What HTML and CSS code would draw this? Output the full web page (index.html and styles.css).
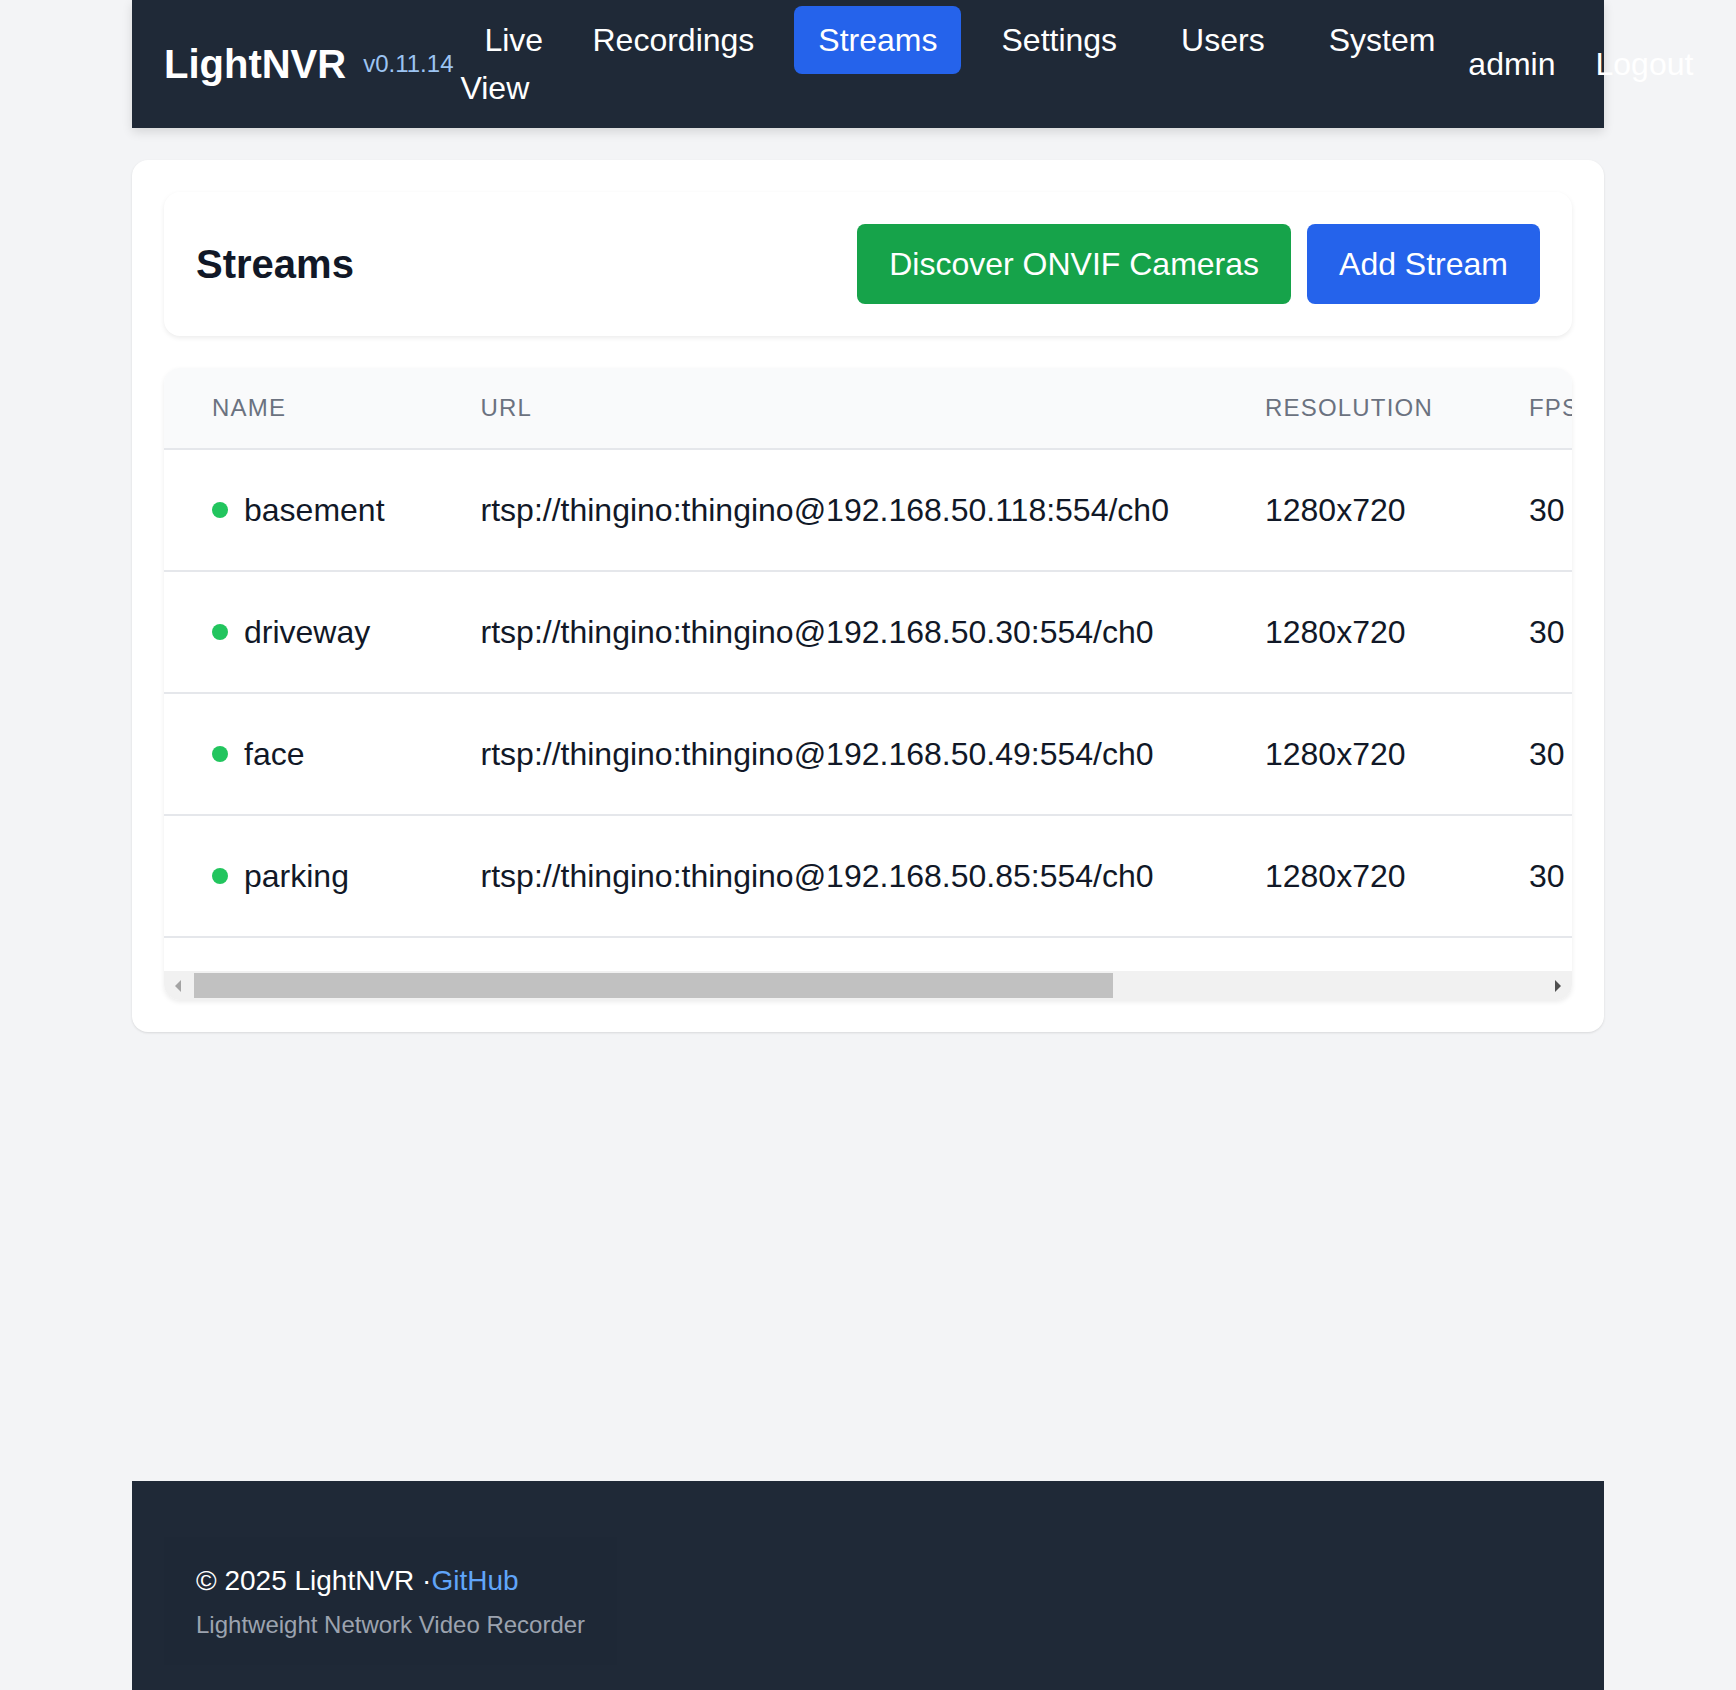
FILE: index.html
```html
<!DOCTYPE html>
<html lang="en">
<head>
<meta charset="utf-8">
<title>Streams - LightNVR</title>
<link rel="stylesheet" href="styles.css">
</head>
<body>
<div class="page">
  <header class="topbar">
    <div class="brand">
      <span class="brand-name">LightNVR</span>
      <span class="brand-version">v0.11.14</span>
    </div>
    <nav class="main-nav">
      <a class="nav-link nav-link--wrap" href="#"><span class="nav-icon"></span> Live View</a>
      <a class="nav-link" href="#">Recordings</a>
      <a class="nav-link is-active" href="#">Streams</a>
      <a class="nav-link" href="#">Settings</a>
      <a class="nav-link" href="#">Users</a>
      <a class="nav-link" href="#">System</a>
    </nav>
    <div class="user-area">
      <span class="user-name">admin</span>
      <a class="nav-link" href="#">Logout</a>
    </div>
  </header>

  <main class="main">
    <section class="panel">
      <div class="page-head">
        <h1 class="page-title">Streams</h1>
        <div class="actions">
          <button class="btn btn--green" type="button">Discover ONVIF Cameras</button>
          <button class="btn btn--blue" type="button">Add Stream</button>
        </div>
      </div>

      <div class="table-card">
        <div class="table-scroll">
          <table class="streams-table">
            <thead>
              <tr>
                <th>Name</th>
                <th>URL</th>
                <th>Resolution</th>
                <th>FPS</th>
                <th>Recording</th>
                <th>Actions</th>
              </tr>
            </thead>
            <tbody>
              <tr>
                <td><span class="name-cell"><span class="status-dot"></span>basement</span></td>
                <td>rtsp://thingino:thingino@192.168.50.118:554/ch0</td>
                <td>1280x720</td>
                <td>30</td>
                <td>Enabled</td>
                <td><span class="row-actions">Edit &nbsp; Delete</span></td>
              </tr>
              <tr>
                <td><span class="name-cell"><span class="status-dot"></span>driveway</span></td>
                <td>rtsp://thingino:thingino@192.168.50.30:554/ch0</td>
                <td>1280x720</td>
                <td>30</td>
                <td>Enabled</td>
                <td><span class="row-actions">Edit &nbsp; Delete</span></td>
              </tr>
              <tr>
                <td><span class="name-cell"><span class="status-dot"></span>face</span></td>
                <td>rtsp://thingino:thingino@192.168.50.49:554/ch0</td>
                <td>1280x720</td>
                <td>30</td>
                <td>Enabled</td>
                <td><span class="row-actions">Edit &nbsp; Delete</span></td>
              </tr>
              <tr>
                <td><span class="name-cell"><span class="status-dot"></span>parking</span></td>
                <td>rtsp://thingino:thingino@192.168.50.85:554/ch0</td>
                <td>1280x720</td>
                <td>30</td>
                <td>Enabled</td>
                <td><span class="row-actions">Edit &nbsp; Delete</span></td>
              </tr>
            </tbody>
          </table>
        </div>
        <div class="hscroll" aria-hidden="true">
          <span class="hscroll-btn hscroll-btn--left"><span class="arrow arrow--left"></span></span>
          <span class="hscroll-track"><span class="hscroll-thumb"></span></span>
          <span class="hscroll-btn hscroll-btn--right"><span class="arrow arrow--right"></span></span>
        </div>
      </div>
    </section>
  </main>

  <footer class="site-footer">
    <div class="footer-box">
      <p class="footer-line">© 2025 LightNVR ·<a class="footer-link" href="#">GitHub</a></p>
      <p class="footer-sub">Lightweight Network Video Recorder</p>
    </div>
  </footer>
</div>
</body>
</html>
```

FILE: styles.css
```css
html, body {
  margin: 0;
  padding: 0;
}

body {
  background: #f3f4f6;
  font-family: "Liberation Sans", Arial, sans-serif;
  color: #111827;
}

.page {
  max-width: 1472px;
  margin: 0 auto;
  height: 100vh;
  display: flex;
  flex-direction: column;
}

/* ---------- Top bar ---------- */
.topbar {
  flex-shrink: 0;
  height: 128px;
  box-sizing: border-box;
  padding: 0 32px;
  display: flex;
  align-items: center;
  background: #1f2937;
  color: #ffffff;
  box-shadow: 0 4px 10px rgba(0, 0, 0, 0.12);
  position: relative;
  z-index: 1;
}

.brand {
  flex-shrink: 0;
  display: flex;
  align-items: center;
}

.brand-name {
  font-size: 40px;
  line-height: 56px;
  font-weight: 700;
}

.brand-version {
  margin-left: 17px;
  font-size: 24px;
  line-height: 32px;
  color: #9cc4f2;
}

.main-nav {
  flex-shrink: 0;
  display: flex;
  align-items: flex-start;
  gap: 16px;
}

.nav-link {
  flex-shrink: 0;
  display: block;
  padding: 10px 24px;
  font-size: 32px;
  line-height: 48px;
  color: #ffffff;
  text-decoration: none;
  border-radius: 8px;
  white-space: nowrap;
}

.nav-link--wrap {
  width: 84px;
  padding: 10px 8px 10px 7px;
  white-space: normal;
}

.nav-icon {
  display: inline-block;
  width: 15px;
  height: 1px;
}

.nav-link.is-active {
  background: #2563eb;
}

.user-area {
  flex-shrink: 0;
  margin-left: 9px;
  display: flex;
  align-items: center;
  gap: 16px;
}

.user-name {
  font-size: 32px;
  line-height: 48px;
  color: #ffffff;
}

/* ---------- Main ---------- */
.main {
  flex-shrink: 0;
  padding-top: 32px;
}

.panel {
  background: #ffffff;
  border-radius: 16px;
  padding: 32px;
  box-shadow: 0 1px 3px rgba(0, 0, 0, 0.08), 0 1px 2px rgba(0, 0, 0, 0.04);
}

.page-head {
  display: flex;
  align-items: center;
  justify-content: space-between;
  padding: 32px;
  border-radius: 16px;
  background: #ffffff;
  box-shadow: 0 2px 5px rgba(0, 0, 0, 0.08);
}

.page-title {
  margin: 0;
  font-size: 40px;
  line-height: 56px;
  font-weight: 700;
  color: #111827;
}

.actions {
  display: flex;
  gap: 16px;
}

.btn {
  border: 0;
  border-radius: 8px;
  padding: 16px 32px;
  font-family: inherit;
  font-size: 32px;
  line-height: 48px;
  color: #ffffff;
  cursor: pointer;
}

.btn--green {
  background: #16a34a;
}

.btn--blue {
  background: #2563eb;
}

/* ---------- Table ---------- */
.table-card {
  margin-top: 32px;
  border-radius: 16px;
  overflow: hidden;
  background: #ffffff;
  box-shadow: 0 2px 5px rgba(0, 0, 0, 0.08);
}

.table-scroll {
  overflow: hidden;
  padding-bottom: 33px;
}

.streams-table {
  border-collapse: collapse;
  width: max-content;
  min-width: 100%;
}

.streams-table thead tr {
  background: #f9fafb;
}

.streams-table th {
  padding: 24px 48px;
  text-align: left;
  font-size: 24px;
  line-height: 32px;
  font-weight: 400;
  text-transform: uppercase;
  letter-spacing: 0.05em;
  color: #6b7280;
  border-bottom: 2px solid #e5e7eb;
  white-space: nowrap;
}

.streams-table td {
  padding: 36px 48px;
  font-size: 32px;
  line-height: 48px;
  color: #111827;
  border-bottom: 2px solid #e5e7eb;
  white-space: nowrap;
}

.name-cell {
  display: flex;
  align-items: center;
  gap: 16px;
}

.status-dot {
  width: 16px;
  height: 16px;
  border-radius: 50%;
  background: #22c55e;
  flex-shrink: 0;
}

.row-actions {
  color: #2563eb;
}

/* fake horizontal scrollbar */
.hscroll {
  display: flex;
  height: 29px;
  background: #f1f1f1;
}

.hscroll-btn {
  width: 28px;
  display: flex;
  align-items: center;
  justify-content: center;
}

.arrow {
  width: 0;
  height: 0;
  border-top: 6px solid transparent;
  border-bottom: 6px solid transparent;
}

.arrow--left {
  border-right: 6px solid #a3a3a3;
}

.arrow--right {
  border-left: 6px solid #505050;
}

.hscroll-track {
  flex: 1;
  display: flex;
  align-items: center;
}

.hscroll-thumb {
  margin-left: 2px;
  width: 68%;
  height: 25px;
  background: #c1c1c1;
}

/* ---------- Footer ---------- */
.site-footer {
  flex-shrink: 0;
  margin-top: auto;
  background: #1f2937;
  padding: 56px 32px 25px;
}

.footer-box {
  width: fit-content;
  padding: 24px 32px;
  background: #1e2836;
}

.footer-line {
  margin: 0;
  font-size: 28px;
  line-height: 40px;
  color: #ffffff;
}

.footer-link {
  color: #60a5fa;
  text-decoration: none;
}

.footer-sub {
  margin: 8px 0 0;
  font-size: 24px;
  line-height: 32px;
  color: #9ca3af;
}
```
